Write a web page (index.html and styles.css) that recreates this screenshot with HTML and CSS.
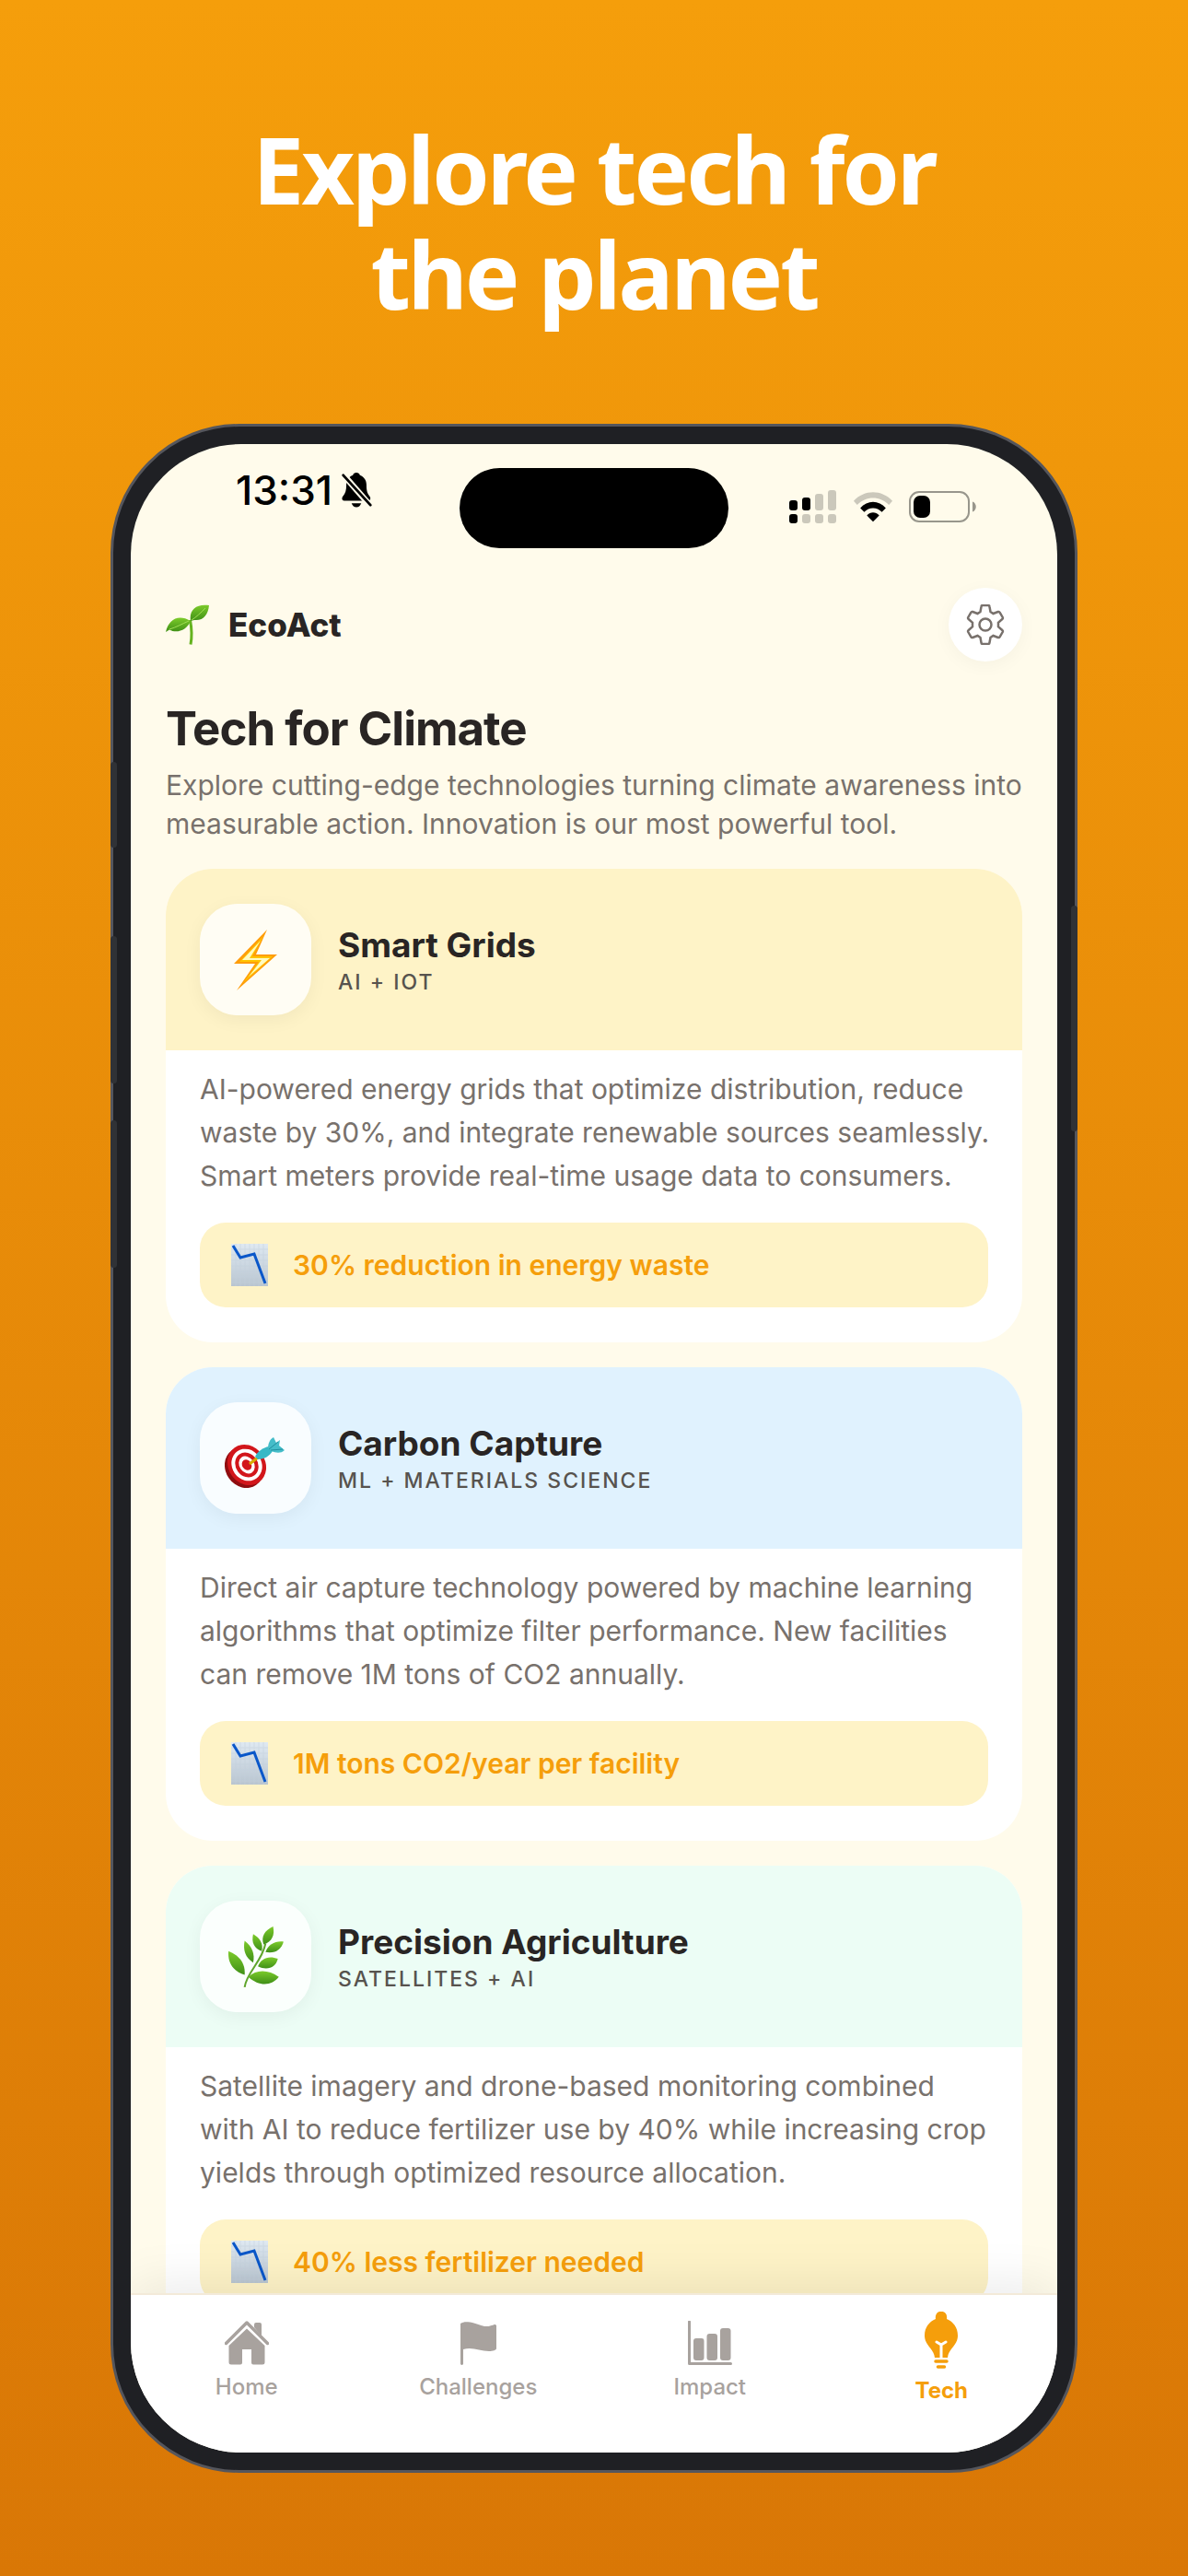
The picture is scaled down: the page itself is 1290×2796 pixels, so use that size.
FILE: index.html
```html
<!DOCTYPE html>
<html lang="en">
<head>
    <meta charset="UTF-8">
    <meta name="viewport" content="width=device-width, initial-scale=1.0">
    <title>EcoAct - Tech for Climate</title>
    <link rel="stylesheet" href="styles.css">
</head>
<body>
    <h1 class="headline">Explore tech for<br>the planet</h1>

    <div class="phone">
        <span class="side-button action"></span>
        <span class="side-button volume-up"></span>
        <span class="side-button volume-down"></span>
        <span class="side-button power"></span>

        <div class="screen">
            <div class="status-bar">
                <div class="status-time">
                    <span>13:31</span>
                    <svg class="bell" viewBox="0 0 34 40">
                        <path d="M17 0c2 0 3.500 1 4 3 5 2 7.500 6 7.500 11 0 7 1 10 4 13.500 1 1.500.5 4.500-2 4.500H3C.5 32 0 29 1.500 27 4.500 24 5.500 20 5.500 14 5.500 9 8 5 13 3c.5-2 2-3 4-3z"/>
                        <path d="M11.500 35h11c-1 3-3 4.500-5.500 4.500s-4.500-1.500-5.500-4.500z"/>
                        <path class="slash-gap" d="M0 0l34 39"/>
                        <path class="slash" d="M2 3l31 34"/>
                    </svg>
                </div>
                <div class="island"></div>
                <div class="status-icons">
                    <svg class="signal" viewBox="0 0 52 36">
                        <g>
                            <rect x="0" y="11" width="9" height="11" rx="3"/>
                            <rect x="14" y="8" width="9" height="14" rx="3"/>
                            <rect x="0" y="26" width="9" height="10" rx="3"/>
                        </g>
                        <g class="off">
                            <rect x="28" y="4" width="9" height="18" rx="3"/>
                            <rect x="42" y="0" width="9" height="22" rx="3"/>
                            <rect x="14" y="26" width="9" height="10" rx="3"/>
                            <rect x="28" y="26" width="9" height="10" rx="3"/>
                            <rect x="42" y="26" width="9" height="10" rx="3"/>
                        </g>
                    </svg>
                    <svg class="wifi" viewBox="0 0 46 34">
                        <path class="off" d="M1 10.500C13-2.800 33-2.800 45 10.500l-4 4.500C31 4.500 15 4.500 5 15z"/>
                        <path d="M8.500 18.500c8-9.300 21-9.300 29 0L33 23c-5.500-6-14.500-6-20 0z"/>
                        <path d="M16 27c4-4.500 10-4.500 14 0l-7 7z"/>
                    </svg>
                    <svg class="battery" viewBox="0 0 74 34">
                        <rect class="shell" x="1" y="1" width="64" height="32" rx="10"/>
                        <rect x="5" y="5" width="18" height="24" rx="7"/>
                        <path class="tip" d="M69 11.500c5 1.500 5 9.500 0 11z"/>
                    </svg>
                </div>
            </div>

            <main class="content">
                <header class="app-header">
                    <div class="brand">
                        <svg class="sprout" viewBox="0 0 48 44">
                            <defs>
                                <linearGradient id="leaf" x1="0" y1="0" x2="0" y2="1">
                                    <stop offset="0" stop-color="#7ccb2a"/>
                                    <stop offset="1" stop-color="#3f8f17"/>
                                </linearGradient>
                            </defs>
                            <path d="M26.500 17c1.500 8 2.500 16 .5 26.500" fill="none" stroke="#65b31f" stroke-width="3"/>
                            <path d="M0 30C3 17 13 10 27 18c-4 10-15 14-23 9.500z" fill="url(#leaf)"/>
                            <path d="M27 18C25 6 33-1 47 1c-1 10-6 17-16 16z" fill="url(#leaf)"/>
                            <path d="M4 27c7-2 14-6 21-9M28 17c5-3 10-8 15-13" fill="none" stroke="#a2df55" stroke-width="1"/>
                        </svg>
                        <span>EcoAct</span>
                    </div>
                    <button class="settings" type="button" aria-label="Settings">
                        <svg viewBox="0 0 44 44">
                            <path d="M16.500 8l1-5.500q.2-1.500 1.500-1.500h6q1.300 0 1.500 1.500l1 5.500 3 2 5.300-2q1.200-.4 1.900.8l3 5.200q.6 1.200-.4 2L36 19.700v4.600l4.300 3.700q1 .8.4 2l-3 5.200q-.7 1.200-1.900.8l-5.300-2-3 2-1 5.500q-.2 1.500-1.500 1.500h-6q-1.300 0-1.500-1.500l-1-5.500-3-2-5.300 2q-1.200.4-1.900-.8l-3-5.200q-.6-1.200.4-2L8 24.300v-4.600L3.700 16q-1-.8-.4-2l3-5.200q.7-1.200 1.900-.8l5.300 2z"/>
                            <circle cx="22" cy="22" r="6.500"/>
                        </svg>
                    </button>
                </header>

                <h2 class="page-title">Tech for Climate</h2>
                <p class="page-intro">Explore cutting-edge technologies turning climate awareness into measurable action. Innovation is our most powerful tool.</p>

                <article class="card">
                    <div class="card-head energy">
                        <div class="card-icon">
                            <svg viewBox="0 0 68 68">
                                <path d="M46 1L10 38h23L13 67l44-39H34z" fill="#ff9d0a"/>
                                <path d="M42 8L16 36h21L20 59l32-29H30z" fill="#ffc400"/>
                                <path d="M39 13L19 34h21L26 52l23-20H27z" fill="#fffbc0"/>
                            </svg>
                        </div>
                        <div>
                            <h3>Smart Grids</h3>
                            <p class="tag">AI + IOT</p>
                        </div>
                    </div>
                    <div class="card-body">
                        <p>AI-powered energy grids that optimize distribution, reduce waste by 30%, and integrate renewable sources seamlessly. Smart meters provide real-time usage data to consumers.</p>
                        <div class="impact">
                            <svg class="chart" viewBox="0 0 40 46"><use href="#chart-down"/></svg>
                            <span>30% reduction in energy waste</span>
                        </div>
                    </div>
                </article>

                <article class="card">
                    <div class="card-head carbon">
                        <div class="card-icon">
                            <svg viewBox="1 1 68 68">
                                <ellipse cx="22" cy="45" rx="20" ry="23" transform="rotate(-35 22 45)" fill="#8f0d10"/>
                                <g transform="rotate(-35 25 42)">
                                    <ellipse cx="25" cy="42" rx="20" ry="23" fill="#d2161b"/>
                                    <ellipse cx="25" cy="42" rx="16" ry="18" fill="#fff"/>
                                    <ellipse cx="25" cy="42" rx="12" ry="14" fill="#d2161b"/>
                                    <ellipse cx="25" cy="42" rx="8" ry="10" fill="#fff"/>
                                    <ellipse cx="25" cy="42" rx="5" ry="6" fill="#d2161b"/>
                                </g>
                                <path d="M28 41l9-7" stroke="#d9a900" stroke-width="3"/>
                                <path d="M34 33c2-5 9-10 15-11l4 5c-3 5-9 9-16 9z" fill="#37b8c6"/>
                                <path d="M48 24c0-5 2-10 6-12l3 6 4-3-1 6 6 5c-4 4-10 3-14 1z" fill="#45bdc9"/>
                                <path d="M49 25l10-8M51 26l13-1" fill="none" stroke="#1f8f9f" stroke-width="1"/>
                            </svg>
                        </div>
                        <div>
                            <h3>Carbon Capture</h3>
                            <p class="tag">ML + MATERIALS SCIENCE</p>
                        </div>
                    </div>
                    <div class="card-body">
                        <p>Direct air capture technology powered by machine learning algorithms that optimize filter performance. New facilities can remove 1M tons of CO2 annually.</p>
                        <div class="impact">
                            <svg class="chart" viewBox="0 0 40 46"><use href="#chart-down"/></svg>
                            <span>1M tons CO2/year per facility</span>
                        </div>
                    </div>
                </article>

                <article class="card">
                    <div class="card-head farming">
                        <div class="card-icon">
                            <svg viewBox="-1 -1 66 66">
                                <path d="M20 64c2-16 18-26 22-46" fill="none" stroke="#5fa52b" stroke-width="2"/>
                                <g fill="url(#leaf)">
                                    <path d="M40 19c-3-8 1-15 10-19 2 9-1 16-10 19z"/>
                                    <path d="M38 26c-8-3-11-9-9-18 7 4 11 10 9 18z"/>
                                    <path d="M42 27c3-8 10-12 19-11-2 8-9 13-19 11z"/>
                                    <path d="M29 38c-8-5-11-13-9-23 8 6 11 14 9 23z"/>
                                    <path d="M34 42c3-8 11-12 21-8-2 9-11 13-21 8z"/>
                                    <path d="M20 51C8 47 2 39 3 26c12 5 18 13 17 25z"/>
                                    <path d="M24 53c8-8 21-8 32 0-7 9-20 11-32 0z"/>
                                </g>
                            </svg>
                        </div>
                        <div>
                            <h3>Precision Agriculture</h3>
                            <p class="tag">SATELLITES + AI</p>
                        </div>
                    </div>
                    <div class="card-body">
                        <p>Satellite imagery and drone-based monitoring combined with AI to reduce fertilizer use by 40% while increasing crop yields through optimized resource allocation.</p>
                        <div class="impact">
                            <svg class="chart" viewBox="0 0 40 46">
                                <defs>
                                    <linearGradient id="paper" x1="0" y1="0" x2="0" y2="1">
                                        <stop offset="0" stop-color="#dfe9f2"/>
                                        <stop offset="1" stop-color="#b9c5d0"/>
                                    </linearGradient>
                                    <g id="chart-down">
                                        <rect width="40" height="46" fill="url(#paper)"/>
                                        <path d="M5 0v46M10 0v46M15 0v46M20 0v46M25 0v46M30 0v46M35 0v46M0 6h40M0 12h40M0 18h40M0 24h40M0 30h40M0 36h40M0 42h40" stroke="#c3d0dc" stroke-width="1" opacity=".5"/>
                                        <path d="M2 2l8 13 15-4 12 32" fill="none" stroke="#0a57c9" stroke-width="3"/>
                                    </g>
                                </defs>
                                <use href="#chart-down"/>
                            </svg>
                            <span>40% less fertilizer needed</span>
                        </div>
                    </div>
                </article>
            </main>

            <nav class="tab-bar">
                <a class="tab" href="#home">
                    <svg viewBox="0 0 48 48">
                        <path d="M1.500 24.500L24 2l22.500 22.500" fill="none" stroke="currentColor" stroke-width="3.500" stroke-linecap="round" stroke-linejoin="round"/>
                        <path d="M32 7V4q0-2 2-2h4q2 0 2 2v13zM24 8.500L43.500 27v18q0 2.500-2.500 2.500H31q-2 0-2-2V31H19v14.500q0 2-2 2H7q-2.500 0-2.500-2.500V27z"/>
                    </svg>
                    <span>Home</span>
                </a>
                <a class="tab" href="#challenges">
                    <svg viewBox="0 0 48 48">
                        <path d="M5 3c7-5 20 2 26 3 5 .5 8-1 11-2 1 0 2 .5 2 1.500V30c0 2-4 3-8 3C26 33 18 28 8 31v16q-1.500 2-3 0z"/>
                    </svg>
                    <span>Challenges</span>
                </a>
                <a class="tab" href="#impact">
                    <svg viewBox="0 0 48 48">
                        <path d="M1.500 1v45.500h45" fill="none" stroke="currentColor" stroke-width="3" stroke-linecap="round" stroke-linejoin="round"/>
                        <rect x="6" y="19" width="11.500" height="24" rx="3"/>
                        <rect x="20.500" y="14" width="11.500" height="29" rx="3"/>
                        <rect x="35" y="8" width="11.500" height="35" rx="3"/>
                    </svg>
                    <span>Impact</span>
                </a>
                <a class="tab active" href="#tech">
                    <svg viewBox="0 0 36 62">
                        <path d="M12 8c-2-11 14-11 12 0 7 3 12 9 12 18 0 11-10 14-11 24H11C10 40 0 37 0 26 0 17 5 11 12 8z"/>
                        <path d="M13 33l5 3 5-3M18 36v15" fill="none" stroke="#fff" stroke-width="3" stroke-linecap="round"/>
                        <path d="M12 54h12M14.500 60h7" fill="none" stroke="currentColor" stroke-width="3.500" stroke-linecap="round"/>
                    </svg>
                    <span>Tech</span>
                </a>
            </nav>
        </div>
    </div>
</body>
</html>
```

FILE: styles.css
```css
* {
    box-sizing: border-box;
}
body {
    margin: 0;
    padding: 126px 120px 112px;
    height: 100vh;
    display: flex;
    flex-direction: column;
    font-family: Inter, "Noto Sans", sans-serif;
    color: #292524;
    background: linear-gradient(180deg, #f59e0b, #d97706);
}
h1, h2, h3, p {
    margin: 0;
}
.headline {
    font-family: "Noto Sans", sans-serif;
    font-size: 100px;
    line-height: 114px;
    font-weight: 700;
    letter-spacing: -3px;
    text-align: center;
    color: #fff;
    margin-bottom: 106px;
}

/* Phone */
.phone {
    position: relative;
    flex: 1;
    min-height: 0;
    padding: 19px;
    background: #1f2024;
    border: 3px solid #55565c;
    border-radius: 140px;
}
.side-button {
    position: absolute;
    left: -3px;
    width: 7px;
    background: #303236;
    border-radius: 4px;
}
.action { top: 364px; height: 93px; }
.volume-up { top: 553px; height: 160px; }
.volume-down { top: 753px; height: 160px; }
.power {
    top: 520px;
    height: 245px;
    left: auto;
    right: -3px;
}
.screen {
    height: 100%;
    display: flex;
    flex-direction: column;
    overflow: hidden;
    background: #fffbeb;
    border-radius: 120px;
}

/* Status bar */
.status-bar {
    display: grid;
    grid-template-columns: 1fr 292px 1fr;
    align-items: center;
    padding-top: 26px;
    color: #000;
}
.status-time {
    display: flex;
    align-items: center;
    align-self: start;
    gap: 9px;
    padding-left: 114px;
    font-size: 44px;
    line-height: 48px;
    font-weight: 500;
}
.bell {
    width: 34px;
    height: 38px;
}
.slash-gap {
    stroke: #fffbeb;
    stroke-width: 7px;
}
.slash {
    stroke: #000;
    stroke-width: 3px;
    stroke-linecap: round;
}
.island {
    height: 87px;
    background: #000;
    border-radius: 44px;
}
.status-icons {
    display: flex;
    align-items: center;
    justify-content: flex-end;
    gap: 17px;
    padding: 0 87px 4px 0;
}
.signal { width: 52px; height: 36px; }
.wifi { width: 44px; height: 34px; }
.battery { width: 74px; height: 34px; }
.off {
    fill: #cbc8bb;
}
.shell {
    fill: none;
    stroke: #98968c;
    stroke-width: 2px;
}
.tip {
    fill: #98968c;
}

/* Content */
.content {
    flex: 1;
    min-height: 0;
    overflow: hidden;
    padding: 43px 38px 0;
}
.app-header {
    display: flex;
    align-items: center;
    justify-content: space-between;
    margin-bottom: 43px;
}
.brand {
    display: flex;
    align-items: center;
    gap: 20px;
    font-size: 35px;
    font-weight: 800;
}
.sprout {
    width: 48px;
    height: 44px;
}
.settings {
    width: 80px;
    height: 80px;
    padding: 18px;
    border: none;
    border-radius: 50%;
    background: #fff;
    box-shadow: 0 4px 20px rgba(0, 0, 0, 0.04);
    cursor: pointer;
}
.settings svg {
    display: block;
    width: 44px;
    height: 44px;
    fill: none;
    stroke: #78716c;
    stroke-width: 2.5px;
}
.page-title {
    font-size: 51px;
    line-height: 60px;
    font-weight: 700;
    letter-spacing: -1px;
    margin-bottom: 10px;
}
.page-intro {
    font-size: 30px;
    line-height: 42px;
    color: #78716c;
    margin-bottom: 28px;
}

/* Cards */
.card {
    overflow: hidden;
    background: #fff;
    border-radius: 51px;
    margin-bottom: 27px;
}
.card-head {
    display: flex;
    align-items: center;
    gap: 29px;
    padding: 38px 37px;
}
.energy { background: #fef3c7; }
.carbon { background: #e0f2fe; }
.farming { background: #ecfdf5; }
.card-icon {
    width: 121px;
    height: 121px;
    display: flex;
    align-items: center;
    justify-content: center;
    background: rgba(255, 255, 255, 0.8);
    border-radius: 41px;
    box-shadow: 0 5px 20px rgba(0, 0, 0, 0.05);
}
.card-icon svg {
    width: 68px;
    height: 68px;
}
.card h3 {
    font-size: 37px;
    line-height: 48px;
    font-weight: 700;
}
.tag {
    font-size: 23px;
    line-height: 32px;
    font-weight: 500;
    letter-spacing: 2px;
    color: #57534e;
}
.card-body {
    padding: 19px 37px 38px;
}
.card-body p {
    font-size: 30px;
    line-height: 47px;
    color: #78716c;
    margin: 0 -4px 27px 0;
}
.impact {
    display: flex;
    align-items: center;
    gap: 27px;
    padding: 23px 34px;
    border-radius: 28px;
    background: #fef3c7;
    color: #f59e0b;
    font-size: 30px;
    font-weight: 600;
}
.chart {
    width: 40px;
    height: 46px;
}

/* Tab bar */
.tab-bar {
    position: relative;
    display: grid;
    grid-template-columns: repeat(4, 1fr);
    height: 173px;
    padding-top: 18px;
    background: #fff;
    border-top: 2px solid #f3ead9;
    box-shadow: 0 -10px 50px rgba(0, 0, 0, 0.08);
}
.tab {
    display: flex;
    flex-direction: column;
    align-items: center;
    padding-top: 10px;
    gap: 10px;
    font-size: 24px;
    line-height: 28px;
    font-weight: 500;
    color: #a8a29e;
    text-decoration: none;
}
.tab svg {
    width: 48px;
    height: 48px;
    fill: currentColor;
}
.tab.active {
    padding-top: 0;
    color: #f59e0b;
    font-weight: 700;
}
.tab.active svg {
    width: 36px;
    height: 62px;
}
```
